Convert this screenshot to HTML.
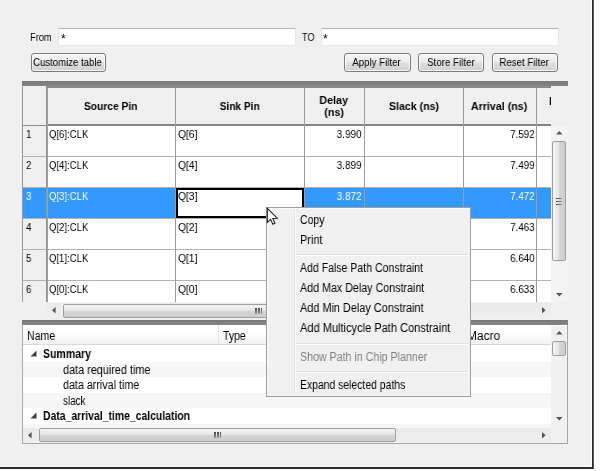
<!DOCTYPE html>
<html><head><meta charset="utf-8"><title>Timing paths</title>
<style>
*{box-sizing:border-box;margin:0;padding:0}
html,body{width:600px;height:471px;overflow:hidden;background:#fff}
body{position:relative;font-family:"Liberation Sans",sans-serif;font-size:11px;color:#000}
div,span.t,svg{position:absolute}
.t{white-space:pre;display:block;will-change:transform}
#win{left:0;top:0;width:594px;height:469px;background:#f0f0f0;border-right:2px solid #2b2b2b;border-bottom:2px solid #2b2b2b;border-right-color:#2b2b2b}
#win:before{content:'';position:absolute;right:-2px;top:0;width:1px;bottom:-2px;background:#5a5a5a}
#win:after{content:"";position:absolute;left:0;top:0;right:0;bottom:0;border-right:1px solid #fbfbfb;border-bottom:1px solid #fbfbfb}
.inp{background:#fff;border:1px solid #e6e8ee;border-top-color:#b4b6bc;border-radius:1px;height:18px;top:28px}
.btn{height:19px;top:53px;border:1px solid #7b7b7b;border-radius:3px;background:linear-gradient(#f5f5f5 0%,#ececec 47%,#dedede 53%,#d1d1d1 100%);box-shadow:inset 0 0 0 1px rgba(255,255,255,.8)}
.band{background:linear-gradient(#787878,#868686)}
.vl{width:1px;background:#9c9c9c}
.hl{height:1px;background:#b2b2b2}
.sel{background:#3399ff}
.track{background:#f0f0f0}
.htr{background:linear-gradient(#ebebeb,#efefef)}
.vth{border:1px solid #a0a0a0;border-radius:2px;background:linear-gradient(90deg,#f4f4f4,#e6e6e6 45%,#d4d4d4 55%,#cdcdcd)}
.hth{border:1px solid #a0a0a0;border-radius:2px;background:linear-gradient(#f4f4f4,#e6e6e6 45%,#d4d4d4 55%,#cdcdcd)}
#menu{left:266px;top:207px;width:205px;height:190px;background:#f1f1f1;border:1px solid #a0a0a0;box-shadow:inset 1px 1px 0 #f9f9f9}
.msep{left:29px;right:2px;height:2px;border-top:1px solid #dfdfdf;border-bottom:1px solid #fff}
.stripe{left:0;right:0;background:#f7f7f7}
</style></head><body>
<div id="win"></div><span class="t" style="left:29.70px;top:30.00px;font-size:11px;line-height:14px;transform:scaleX(0.8414);transform-origin:0 50%">From</span><div class="inp" style="left:58px;width:238px"></div><span class="t" style="left:61.30px;top:32.10px;font-size:12px;line-height:15px;transform:scaleX(1.0000);transform-origin:0 50%">*</span><span class="t" style="left:302.00px;top:30.00px;font-size:11px;line-height:14px;transform:scaleX(0.8290);transform-origin:0 50%">TO</span><div class="inp" style="left:320.5px;width:238px"></div><span class="t" style="left:323.40px;top:32.10px;font-size:12px;line-height:15px;transform:scaleX(1.0000);transform-origin:0 50%">*</span><div class="btn" style="left:31px;width:75px"></div><span class="t" style="left:28.26px;top:55.00px;font-size:11px;line-height:14px;transform:scaleX(0.8710);transform-origin:50% 50%">Customize table</span><div class="btn" style="left:344px;width:67px"></div><span class="t" style="left:348.78px;top:55.00px;font-size:11px;line-height:14px;transform:scaleX(0.8795);transform-origin:50% 50%">Apply Filter</span><div class="btn" style="left:418px;width:66px"></div><span class="t" style="left:423.90px;top:55.00px;font-size:11px;line-height:14px;transform:scaleX(0.8867);transform-origin:50% 50%">Store Filter</span><div class="btn" style="left:492px;width:66px"></div><span class="t" style="left:496.38px;top:55.00px;font-size:11px;line-height:14px;transform:scaleX(0.8800);transform-origin:50% 50%">Reset Filter</span><div class="band" style="left:22px;top:81px;width:546px;height:5px"></div><div style="left:22px;top:87px;width:529px;height:215px;background:#fff;overflow:hidden" id="tbl"><div style="left:0;top:0;width:529px;height:38px;background:#f0f0f0"></div><div style="left:0;top:0;width:25px;height:215px;background:#f0f0f0"></div><div class="sel" style="left:0;top:101px;width:529px;height:30px"></div><div style="left:25px;top:37px;width:504px;height:2px;background:#858585"></div><div style="left:0;top:38px;width:25px;height:1px;background:#8c8c8c"></div><div class="hl" style="left:0;top:69px;width:529px"></div><div class="hl" style="left:0;top:100px;width:529px"></div><div class="hl" style="left:0;top:131px;width:529px"></div><div class="hl" style="left:0;top:162px;width:529px"></div><div class="hl" style="left:0;top:193px;width:529px"></div><div class="vl" style="left:0;top:0;height:215px;background:#9a9a9a"></div><div style="left:24px;top:0;height:215px;width:2px;background:linear-gradient(90deg,#8a8a8a,#a8a8a8)"></div><div class="vl" style="left:153px;top:0;height:215px"></div><div class="vl" style="left:282px;top:0;height:215px"></div><div class="vl" style="left:342px;top:0;height:215px"></div><div class="vl" style="left:441px;top:0;height:215px"></div><div class="vl" style="left:514px;top:0;height:215px"></div><div style="left:154px;top:101px;width:128px;height:30px;background:#fff;border:2px solid #000"></div></div><div style="left:46px;top:86px;width:505px;height:2px;background:#8a8a8a"></div><div style="left:22px;top:86px;width:1px;height:1px;background:#9a9a9a"></div><span class="t" style="left:81.77px;top:98.50px;font-size:11px;line-height:14px;transform:scaleX(0.9309);transform-origin:50% 50%;font-weight:bold">Source Pin</span><span class="t" style="left:217.90px;top:98.50px;font-size:11px;line-height:14px;transform:scaleX(0.9215);transform-origin:50% 50%;font-weight:bold">Sink Pin</span><span class="t" style="left:319.02px;top:93.30px;font-size:11px;line-height:14px;transform:scaleX(0.9775);transform-origin:50% 50%;font-weight:bold">Delay</span><span class="t" style="left:323.91px;top:105.00px;font-size:11px;line-height:14px;transform:scaleX(0.9667);transform-origin:50% 50%;font-weight:bold">(ns)</span><span class="t" style="left:387.52px;top:98.50px;font-size:11px;line-height:14px;transform:scaleX(0.9640);transform-origin:50% 50%;font-weight:bold">Slack (ns)</span><span class="t" style="left:470.16px;top:98.50px;font-size:11px;line-height:14px;transform:scaleX(0.9711);transform-origin:50% 50%;font-weight:bold">Arrival (ns)</span><div style="left:537px;top:88px;width:14px;height:36px;overflow:hidden"><span class="t" style="left:12.00px;top:5.50px;font-size:11px;line-height:14px;transform:scaleX(0.8800);transform-origin:0 50%;font-weight:bold">I</span></div><span class="t" style="left:25.80px;top:127.00px;font-size:11px;line-height:14px;transform:scaleX(0.8800);transform-origin:0 50%">1</span><span class="t" style="left:49.00px;top:127.00px;font-size:11px;line-height:14px;transform:scaleX(0.8685);transform-origin:0 50%">Q[6]:CLK</span><span class="t" style="left:178.00px;top:127.00px;font-size:11px;line-height:14px;transform:scaleX(0.9376);transform-origin:0 50%">Q[6]</span><span class="t" style="left:333.97px;top:127.00px;font-size:11px;line-height:14px;transform:scaleX(0.9008);transform-origin:100% 50%">3.990</span><span class="t" style="left:506.67px;top:127.00px;font-size:11px;line-height:14px;transform:scaleX(0.8826);transform-origin:100% 50%">7.592</span><span class="t" style="left:25.80px;top:158.00px;font-size:11px;line-height:14px;transform:scaleX(0.8800);transform-origin:0 50%">2</span><span class="t" style="left:49.00px;top:158.00px;font-size:11px;line-height:14px;transform:scaleX(0.8685);transform-origin:0 50%">Q[4]:CLK</span><span class="t" style="left:178.00px;top:158.00px;font-size:11px;line-height:14px;transform:scaleX(0.9376);transform-origin:0 50%">Q[4]</span><span class="t" style="left:333.97px;top:158.00px;font-size:11px;line-height:14px;transform:scaleX(0.9008);transform-origin:100% 50%">3.899</span><span class="t" style="left:506.67px;top:158.00px;font-size:11px;line-height:14px;transform:scaleX(0.8826);transform-origin:100% 50%">7.499</span><span class="t" style="left:25.80px;top:189.00px;font-size:11px;line-height:14px;transform:scaleX(0.8800);transform-origin:0 50%;color:#fff">3</span><span class="t" style="left:49.00px;top:189.00px;font-size:11px;line-height:14px;transform:scaleX(0.8685);transform-origin:0 50%;color:#fff">Q[3]:CLK</span><span class="t" style="left:178.00px;top:189.00px;font-size:11px;line-height:14px;transform:scaleX(0.9376);transform-origin:0 50%">Q[3]</span><span class="t" style="left:333.97px;top:189.00px;font-size:11px;line-height:14px;transform:scaleX(0.9008);transform-origin:100% 50%;color:#fff">3.872</span><span class="t" style="left:506.67px;top:189.00px;font-size:11px;line-height:14px;transform:scaleX(0.8826);transform-origin:100% 50%;color:#fff">7.472</span><span class="t" style="left:25.80px;top:220.00px;font-size:11px;line-height:14px;transform:scaleX(0.8800);transform-origin:0 50%">4</span><span class="t" style="left:49.00px;top:220.00px;font-size:11px;line-height:14px;transform:scaleX(0.8685);transform-origin:0 50%">Q[2]:CLK</span><span class="t" style="left:178.00px;top:220.00px;font-size:11px;line-height:14px;transform:scaleX(0.9376);transform-origin:0 50%">Q[2]</span><span class="t" style="left:506.67px;top:220.00px;font-size:11px;line-height:14px;transform:scaleX(0.8826);transform-origin:100% 50%">7.463</span><span class="t" style="left:25.80px;top:251.00px;font-size:11px;line-height:14px;transform:scaleX(0.8800);transform-origin:0 50%">5</span><span class="t" style="left:49.00px;top:251.00px;font-size:11px;line-height:14px;transform:scaleX(0.8685);transform-origin:0 50%">Q[1]:CLK</span><span class="t" style="left:178.00px;top:251.00px;font-size:11px;line-height:14px;transform:scaleX(0.9376);transform-origin:0 50%">Q[1]</span><span class="t" style="left:506.67px;top:251.00px;font-size:11px;line-height:14px;transform:scaleX(0.8826);transform-origin:100% 50%">6.640</span><span class="t" style="left:25.80px;top:282.00px;font-size:11px;line-height:14px;transform:scaleX(0.8800);transform-origin:0 50%">6</span><span class="t" style="left:49.00px;top:282.00px;font-size:11px;line-height:14px;transform:scaleX(0.8685);transform-origin:0 50%">Q[0]:CLK</span><span class="t" style="left:178.00px;top:282.00px;font-size:11px;line-height:14px;transform:scaleX(0.9376);transform-origin:0 50%">Q[0]</span><span class="t" style="left:506.67px;top:282.00px;font-size:11px;line-height:14px;transform:scaleX(0.8826);transform-origin:100% 50%">6.633</span><div class="track" style="left:551px;top:126px;width:17px;height:176px;background:#f3f3f3"></div><svg style="left:555.2px;top:130.4px" width="8.6" height="5.6"><polygon points="1.0,4.6 7.6,4.6 4.3,1.0" fill="#555"/></svg><svg style="left:555.2px;top:292.2px" width="8.6" height="5.6"><polygon points="1.0,1.0 7.6,1.0 4.3,4.6" fill="#555"/></svg><div class="vth" style="left:552px;top:141px;width:14px;height:120px"></div><div style="left:555.5px;top:198.0px;width:6px;height:1.4px;background:linear-gradient(90deg,#444,#999)"></div><div style="left:555.5px;top:200.8px;width:6px;height:1.4px;background:linear-gradient(90deg,#444,#999)"></div><div style="left:555.5px;top:203.6px;width:6px;height:1.4px;background:linear-gradient(90deg,#444,#999)"></div><div class="track" style="left:22px;top:302px;width:546px;height:18px"></div><div class="htr" style="left:47px;top:303px;width:504px;height:16px"></div><svg style="left:51.2px;top:306.2px" width="5.6" height="8.6"><polygon points="4.6,1.0 4.6,7.6 1.0,4.3" fill="#555"/></svg><svg style="left:541.2px;top:306.2px" width="5.6" height="8.6"><polygon points="1.0,1.0 1.0,7.6 4.6,4.3" fill="#555"/></svg><div class="hth" style="left:63px;top:304px;width:392px;height:14px"></div><div style="left:255.2px;top:307.5px;width:1.5px;height:6px;background:linear-gradient(#444,#999)"></div><div style="left:258.0px;top:307.5px;width:1.5px;height:6px;background:linear-gradient(#444,#999)"></div><div style="left:260.8px;top:307.5px;width:1.5px;height:6px;background:linear-gradient(#444,#999)"></div><div class="band" style="left:22px;top:320px;width:546px;height:5px"></div><div id="low" style="left:22px;top:325px;width:546px;height:119px;background:#fff;border:1px solid #a8a8a8;border-top:none;overflow:hidden"><div style="left:0;top:0;width:529px;height:20px;background:linear-gradient(#fff 30%,#f3f3f3);border-bottom:1px solid #d9d9d9"></div><div style="left:195px;top:0;width:1px;height:19px;background:#e3e3e3"></div><div class="stripe" style="top:36.5px;height:15.5px"></div><div class="stripe" style="top:67.5px;height:15.5px"></div><div class="stripe" style="top:98.5px;height:15.5px"></div></div><span class="t" style="left:26.70px;top:329.00px;font-size:12px;line-height:15px;transform:scaleX(0.8839);transform-origin:0 50%">Name</span><span class="t" style="left:222.70px;top:329.00px;font-size:12px;line-height:15px;transform:scaleX(0.8726);transform-origin:0 50%">Type</span><div style="left:471px;top:326px;width:60px;height:18px;overflow:hidden"><span class="t" style="left:-4.50px;top:3.00px;font-size:12px;line-height:15px;transform:scaleX(0.9897);transform-origin:0 50%">Macro</span></div><span class="t" style="left:43.20px;top:347.00px;font-size:12px;line-height:15px;transform:scaleX(0.8775);transform-origin:0 50%;font-weight:bold">Summary</span><span class="t" style="left:62.50px;top:362.50px;font-size:12px;line-height:15px;transform:scaleX(0.9045);transform-origin:0 50%">data required time</span><span class="t" style="left:62.50px;top:378.00px;font-size:12px;line-height:15px;transform:scaleX(0.8925);transform-origin:0 50%">data arrival time</span><span class="t" style="left:62.50px;top:393.50px;font-size:12px;line-height:15px;transform:scaleX(0.8229);transform-origin:0 50%">slack</span><span class="t" style="left:43.20px;top:409.00px;font-size:12px;line-height:15px;transform:scaleX(0.8677);transform-origin:0 50%;font-weight:bold">Data_arrival_time_calculation</span><svg style="left:30px;top:350.0px" width="8" height="8"><polygon points="6.5,0.5 6.5,6.5 0.5,6.5" fill="#404040"/></svg><svg style="left:30px;top:412.0px" width="8" height="8"><polygon points="6.5,0.5 6.5,6.5 0.5,6.5" fill="#404040"/></svg><div class="track" style="left:551px;top:326px;width:16px;height:102px;background:#f1f1f1"></div><svg style="left:555.2px;top:330.2px" width="8.6" height="5.6"><polygon points="1.0,4.6 7.6,4.6 4.3,1.0" fill="#555"/></svg><svg style="left:555.2px;top:415.7px" width="8.6" height="5.6"><polygon points="1.0,1.0 7.6,1.0 4.3,4.6" fill="#555"/></svg><div class="vth" style="left:552px;top:341px;width:14px;height:15px"></div><div class="track" style="left:23px;top:428px;width:544px;height:15px"></div><div class="htr" style="left:23px;top:428px;width:528px;height:15px"></div><svg style="left:27.4px;top:430.7px" width="5.6" height="8.6"><polygon points="4.6,1.0 4.6,7.6 1.0,4.3" fill="#555"/></svg><svg style="left:541.2px;top:430.7px" width="5.6" height="8.6"><polygon points="1.0,1.0 1.0,7.6 4.6,4.3" fill="#555"/></svg><div class="hth" style="left:39px;top:428px;width:357px;height:14px"></div><div style="left:214.2px;top:431.5px;width:1.5px;height:6px;background:linear-gradient(#444,#999)"></div><div style="left:217.0px;top:431.5px;width:1.5px;height:6px;background:linear-gradient(#444,#999)"></div><div style="left:219.8px;top:431.5px;width:1.5px;height:6px;background:linear-gradient(#444,#999)"></div><div id="menu"><div style="left:27px;top:2px;bottom:2px;width:2px;border-left:1px solid #e2e3e3;border-right:1px solid #fff"></div><div class="msep" style="top:46px"></div><div class="msep" style="top:135px"></div><div class="msep" style="top:163px"></div></div><span class="t" style="left:299.60px;top:212.80px;font-size:12px;line-height:15px;transform:scaleX(0.8745);transform-origin:0 50%">Copy</span><span class="t" style="left:299.60px;top:232.80px;font-size:12px;line-height:15px;transform:scaleX(0.9114);transform-origin:0 50%">Print</span><span class="t" style="left:299.60px;top:260.50px;font-size:12px;line-height:15px;transform:scaleX(0.8781);transform-origin:0 50%">Add False Path Constraint</span><span class="t" style="left:299.60px;top:280.50px;font-size:12px;line-height:15px;transform:scaleX(0.8916);transform-origin:0 50%">Add Max Delay Constraint</span><span class="t" style="left:299.60px;top:300.50px;font-size:12px;line-height:15px;transform:scaleX(0.9077);transform-origin:0 50%">Add Min Delay Constraint</span><span class="t" style="left:299.60px;top:320.80px;font-size:12px;line-height:15px;transform:scaleX(0.9204);transform-origin:0 50%">Add Multicycle Path Constraint</span><span class="t" style="left:299.60px;top:349.50px;font-size:12px;line-height:15px;transform:scaleX(0.8869);transform-origin:0 50%;color:#808080">Show Path in Chip Planner</span><span class="t" style="left:299.60px;top:378.00px;font-size:12px;line-height:15px;transform:scaleX(0.8664);transform-origin:0 50%">Expand selected paths</span><svg style="left:266px;top:207px" width="14" height="20" viewBox="0 0 14 20"><path d="M1.3 1.3 L1.3 15.4 L4.6 12.3 L6.9 17.3 L9 16.3 L6.8 11.4 L11.2 11.2 Z" fill="#fff" stroke="#222" stroke-width="1.1" stroke-linejoin="miter"/></svg>
</body></html>
